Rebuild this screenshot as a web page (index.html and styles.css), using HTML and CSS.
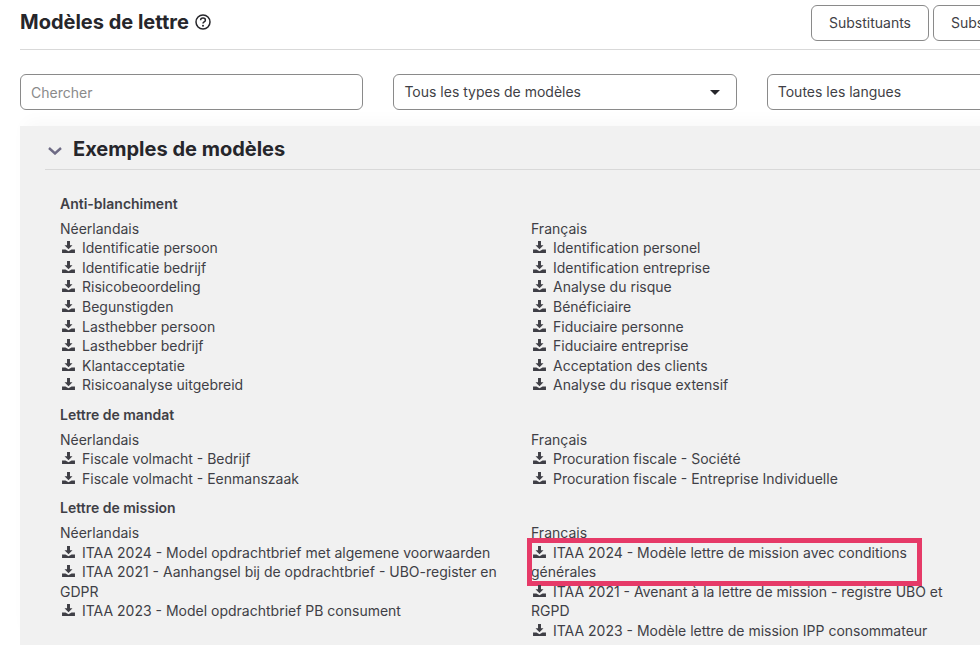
FILE: index.html
```html
<!DOCTYPE html>
<html lang="fr">
<head>
    <meta charset="UTF-8">
    <title>Modèles de lettre</title>
    <link rel="stylesheet" href="styles.css">
</head>
<body>
    <svg class="sprite" aria-hidden="true">
        <symbol id="dl" viewBox="0 0 14 13">
            <path d="M5.400 0h3.200v4.600h2.700L7 9 2.700 4.600h2.700z"/>
            <path d="M0 9.200h3.700L7 11.200l3.300-2H14V13H0z"/>
        </symbol>
    </svg>

    <div class="page">
        <div class="header">
            <h1 class="title">Modèles de lettre</h1>
            <svg class="help" viewBox="0 0 16 16">
                <circle cx="8" cy="8" r="7"/>
                <path d="M5.600 6.300c0-1.400 1.100-2.200 2.400-2.200s2.400.8 2.400 2.100c0 1.800-2.400 1.700-2.400 3.400"/>
                <circle class="dot" cx="8" cy="11.800" r="1"/>
            </svg>
            <div class="header-btns">
                <button class="btn">Substituants</button>
                <button class="btn">Substituants</button>
            </div>
        </div>

        <div class="filters">
            <input class="field search" type="text" placeholder="Chercher">
            <div class="field select">Tous les types de modèles<span class="caret"></span></div>
            <div class="field select">Toutes les langues<span class="caret"></span></div>
        </div>

        <div class="panel">
            <div class="panel-head">
                <svg class="chevron" viewBox="0 0 14 8"><path d="M1 1l6 5.500L13 1"/></svg>
                <h2 class="panel-title">Exemples de modèles</h2>
            </div>

            <div class="group">
                <h3 class="group-title">Anti-blanchiment</h3>
                <div class="cols">
                    <div class="col">
                        <div>Néerlandais</div>
                        <a class="doc"><svg class="ico"><use href="#dl"/></svg>Identificatie persoon</a>
                        <a class="doc"><svg class="ico"><use href="#dl"/></svg>Identificatie bedrijf</a>
                        <a class="doc"><svg class="ico"><use href="#dl"/></svg>Risicobeoordeling</a>
                        <a class="doc"><svg class="ico"><use href="#dl"/></svg>Begunstigden</a>
                        <a class="doc"><svg class="ico"><use href="#dl"/></svg>Lasthebber persoon</a>
                        <a class="doc"><svg class="ico"><use href="#dl"/></svg>Lasthebber bedrijf</a>
                        <a class="doc"><svg class="ico"><use href="#dl"/></svg>Klantacceptatie</a>
                        <a class="doc"><svg class="ico"><use href="#dl"/></svg>Risicoanalyse uitgebreid</a>
                    </div>
                    <div class="col">
                        <div>Français</div>
                        <a class="doc"><svg class="ico"><use href="#dl"/></svg>Identification personel</a>
                        <a class="doc"><svg class="ico"><use href="#dl"/></svg>Identification entreprise</a>
                        <a class="doc"><svg class="ico"><use href="#dl"/></svg>Analyse du risque</a>
                        <a class="doc"><svg class="ico"><use href="#dl"/></svg>Bénéficiaire</a>
                        <a class="doc"><svg class="ico"><use href="#dl"/></svg>Fiduciaire personne</a>
                        <a class="doc"><svg class="ico"><use href="#dl"/></svg>Fiduciaire entreprise</a>
                        <a class="doc"><svg class="ico"><use href="#dl"/></svg>Acceptation des clients</a>
                        <a class="doc"><svg class="ico"><use href="#dl"/></svg>Analyse du risque extensif</a>
                    </div>
                </div>
            </div>

            <div class="group">
                <h3 class="group-title">Lettre de mandat</h3>
                <div class="cols">
                    <div class="col">
                        <div>Néerlandais</div>
                        <a class="doc"><svg class="ico"><use href="#dl"/></svg>Fiscale volmacht - Bedrijf</a>
                        <a class="doc"><svg class="ico"><use href="#dl"/></svg>Fiscale volmacht - Eenmanszaak</a>
                    </div>
                    <div class="col">
                        <div>Français</div>
                        <a class="doc"><svg class="ico"><use href="#dl"/></svg>Procuration fiscale - Société</a>
                        <a class="doc"><svg class="ico"><use href="#dl"/></svg>Procuration fiscale - Entreprise Individuelle</a>
                    </div>
                </div>
            </div>

            <div class="group">
                <h3 class="group-title">Lettre de mission</h3>
                <div class="cols">
                    <div class="col">
                        <div>Néerlandais</div>
                        <a class="doc"><svg class="ico"><use href="#dl"/></svg>ITAA 2024 - Model opdrachtbrief met algemene voorwaarden</a>
                        <a class="doc"><svg class="ico"><use href="#dl"/></svg>ITAA 2021 - Aanhangsel bij de opdrachtbrief - UBO-register en GDPR</a>
                        <a class="doc"><svg class="ico"><use href="#dl"/></svg>ITAA 2023 - Model opdrachtbrief PB consument</a>
                    </div>
                    <div class="col">
                        <div>Français</div>
                        <a class="doc marked"><svg class="ico"><use href="#dl"/></svg>ITAA 2024 - Modèle lettre de mission avec conditions générales</a>
                        <a class="doc"><svg class="ico"><use href="#dl"/></svg>ITAA 2021 - Avenant à la lettre de mission - registre UBO et RGPD</a>
                        <a class="doc"><svg class="ico"><use href="#dl"/></svg>ITAA 2023 - Modèle lettre de mission IPP consommateur</a>
                    </div>
                </div>
            </div>
        </div>
    </div>
</body>
</html>
```
FILE: styles.css
```css
html, body {
    margin: 0;
    padding: 0;
    height: 100%;
    overflow: hidden;
    background: #fff;
}

body {
    font-family: 'Inter', sans-serif;
    font-size: 14px;
    line-height: 19.6px;
    color: #3f3f46;
}

.sprite {
    display: none;
}

.page {
    width: 1031px;
    margin-left: 20px;
}

.header {
    display: flex;
    align-items: center;
    height: 49px;
    border-bottom: 1px solid #d9d9d9;
}

.title {
    margin: 0 0 6px;
    font-size: 20px;
    line-height: 24px;
    font-weight: 700;
    color: #26262b;
}

.help {
    width: 16px;
    height: 16px;
    margin: 0 0 6px 6px;
    fill: none;
    stroke: #26262b;
    stroke-width: 1.5;
}

.help .dot {
    fill: #26262b;
    stroke: none;
}

.header-btns {
    display: flex;
    gap: 4px;
    margin-left: auto;
    margin-bottom: 3px;
}

.btn {
    width: 118px;
    height: 36px;
    background: #fff;
    border: 1px solid #8a8a8a;
    border-radius: 6px;
    font: inherit;
    color: #3f3f46;
    padding: 0;
}

.filters {
    display: flex;
    gap: 30px;
    margin-top: 24px;
}

.field {
    box-sizing: border-box;
    width: 343.4px;
    flex: none;
    height: 36px;
    border: 1px solid #8a8a8a;
    border-radius: 6px;
    background: #fff;
    font: inherit;
    color: #3f3f46;
    padding: 0 10px;
}

.search {
    padding-top: 1px;
}

.field::placeholder {
    color: #8a8a8a;
}

.select {
    display: flex;
    align-items: center;
    justify-content: space-between;
    padding-right: 16px;
}

.caret {
    width: 0;
    height: 0;
    border-left: 5px solid transparent;
    border-right: 5px solid transparent;
    border-top: 5px solid #26262b;
}

.panel {
    margin-top: 16px;
    background: #f1f1f1;
    padding-left: 25px;
    height: 520px;
    box-shadow: 0 -10px 16px -6px rgba(0, 0, 0, 0.03);
}

.panel-head {
    box-sizing: border-box;
    display: flex;
    align-items: center;
    height: 44px;
    padding-top: 2px;
    border-bottom: 1px solid #d9d9d9;
    margin-bottom: 24px;
}

.chevron {
    width: 14px;
    height: 8px;
    margin: 5px 11px 0 3px;
    fill: none;
    stroke: #6e6b85;
    stroke-width: 2.4;
}

.panel-title {
    margin: 0;
    font-size: 20px;
    line-height: 24px;
    font-weight: 700;
    color: #26262b;
}

.group {
    padding-left: 15px;
    margin-bottom: 10px;
}

.group-title {
    margin: 0 0 5px;
    font-size: 14px;
    line-height: 19.6px;
    font-weight: 600;
}

.cols {
    display: grid;
    grid-template-columns: 441px 441px;
    column-gap: 30px;
}

.doc {
    display: block;
    position: relative;
}

.ico {
    width: 13px;
    height: 12px;
    margin: 0 7px 0 2px;
    fill: #3f3f46;
}

/* annotation over the screenshot */
.marked::after {
    content: "";
    position: absolute;
    left: -4px;
    top: -5px;
    width: 395px;
    height: 48px;
    box-sizing: border-box;
    border: 5px solid #e63a68;
}
```
